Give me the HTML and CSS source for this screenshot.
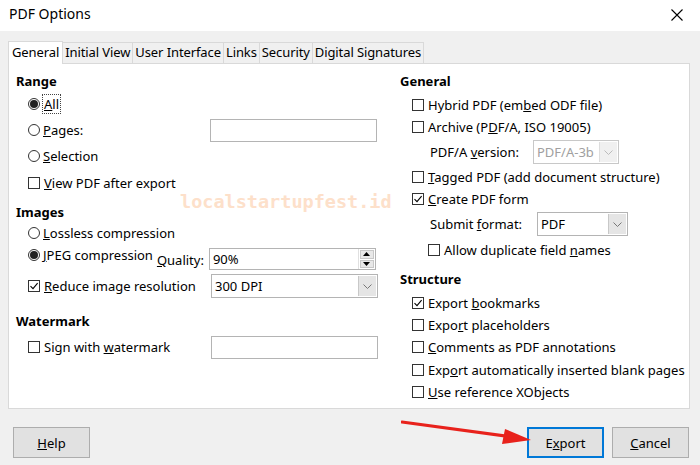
FILE: index.html
```html
<!DOCTYPE html>
<html>
<head>
<meta charset="utf-8">
<link rel="stylesheet" href="styles.css">
</head>
<body>
<div class="dialog">
  <div class="titlebar">
    <span class="title">PDF Options</span>
    <svg class="close" width="12" height="12" viewBox="0 0 12 12"><path d="M0.5 0.5L11.5 11.5M11.5 0.5L0.5 11.5" stroke="#000" stroke-width="1.1" fill="none"/></svg>
  </div>
  <div class="body">
    <div class="tabs">
      <div class="tab active">General</div>
      <div class="tab">Initial View</div>
      <div class="tab">User Interface</div>
      <div class="tab">Links</div>
      <div class="tab">Security</div>
      <div class="tab">Digital Signatures</div>
    </div>
    <div class="panel">
      <div class="col left">
        <div class="hdr">Range</div>
        <div class="row r26"><span class="radio on"></span><span class="focus"><u>A</u>ll</span></div>
        <div class="row r26"><span class="radio"></span><span class="lbl"><u>P</u>ages:</span><span class="textbox"></span></div>
        <div class="row r26"><span class="radio"></span><span><u>S</u>election</span></div>
        <div class="row r28"><span class="check"></span><span><u>V</u>iew PDF after export</span></div>
        <div class="hdr h-img">Images</div>
        <div class="row r22"><span class="radio"></span><span><u>L</u>ossless compression</span></div>
        <div class="row r28 jpeg">
          <span class="radio on"></span><span class="jlbl"><u>J</u>PEG compression</span>
          <span class="qlbl"><u>Q</u>uality:</span>
          <span class="spin"><span class="val">90%</span><span class="spinbtns"><span class="sb"><svg width="7" height="4" viewBox="0 0 7 4"><path d="M0 4L3.5 0L7 4Z" fill="#000"/></svg></span><span class="sb"><svg width="7" height="4" viewBox="0 0 7 4"><path d="M0 0L3.5 4L7 0Z" fill="#000"/></svg></span></span></span>
        </div>
        <div class="row r26 res"><span class="check on"><svg width="10" height="10" viewBox="0 0 10 10"><path d="M1.5 5.2L4 7.6L8.6 2.2" stroke="#000" stroke-width="1.1" fill="none"/></svg></span><span class="lbl"><u>R</u>educe image resolution</span>
          <span class="combo wide"><span class="val">300 DPI</span><span class="arrow"><svg width="9" height="5" viewBox="0 0 9 5"><path d="M0.5 0.5L4.5 4.5L8.5 0.5" stroke="#777" stroke-width="1" fill="none"/></svg></span></span>
        </div>
        <div class="hdr h-wm">Watermark</div>
        <div class="row r26 sign"><span class="check"></span><span class="lbl">Sign with <u>w</u>atermark</span><span class="textbox"></span></div>
      </div>
      <div class="col right">
        <div class="hdr">General</div>
        <div class="row r22"><span class="check"></span><span>Hybrid PDF (em<u>b</u>ed ODF file)</span></div>
        <div class="row r22"><span class="check"></span><span>Archive (P<u>D</u>F/A, ISO 19005)</span></div>
        <div class="row r28 sub"><span class="slbl">PDF/A <u>v</u>ersion:</span>
          <span class="combo dis"><span class="val">PDF/A-3b</span><span class="arrow"><svg width="9" height="5" viewBox="0 0 9 5"><path d="M0.5 0.5L4.5 4.5L8.5 0.5" stroke="#bbb" stroke-width="1" fill="none"/></svg></span></span>
        </div>
        <div class="row r22"><span class="check"></span><span><u>T</u>agged PDF (add document structure)</span></div>
        <div class="row r22"><span class="check on"><svg width="10" height="10" viewBox="0 0 10 10"><path d="M1.5 5.2L4 7.6L8.6 2.2" stroke="#000" stroke-width="1.1" fill="none"/></svg></span><span><u>C</u>reate PDF form</span></div>
        <div class="row r28 sub"><span class="slbl2">Submit <u>f</u>ormat:</span>
          <span class="combo fmt"><span class="val">PDF</span><span class="arrow"><svg width="9" height="5" viewBox="0 0 9 5"><path d="M0.5 0.5L4.5 4.5L8.5 0.5" stroke="#777" stroke-width="1" fill="none"/></svg></span></span>
        </div>
        <div class="row r24 sub2"><span class="check"></span><span>Allow duplicate field <u>n</u>ames</span></div>
        <div class="hdr h-st">Structure</div>
        <div class="row r22"><span class="check on"><svg width="10" height="10" viewBox="0 0 10 10"><path d="M1.5 5.2L4 7.6L8.6 2.2" stroke="#000" stroke-width="1.1" fill="none"/></svg></span><span>Export <u>b</u>ookmarks</span></div>
        <div class="row r22"><span class="check"></span><span>Expo<u>r</u>t placeholders</span></div>
        <div class="row r22"><span class="check"></span><span><u>C</u>omments as PDF annotations</span></div>
        <div class="row r23"><span class="check"></span><span>Exp<u>o</u>rt automatically inserted blank pages</span></div>
        <div class="row r22"><span class="check"></span><span><u>U</u>se reference XObjects</span></div>
      </div>
    </div>
    <div class="buttons">
      <button class="btn"><u>H</u>elp</button>
      <div class="spacer"></div>
      <button class="btn default">E<u>x</u>port</button>
      <button class="btn"><u>C</u>ancel</button>
    </div>
  </div>
  <div class="wm">localstartupfest.id</div>
  <svg class="redarrow" width="140" height="30" viewBox="0 0 140 30"><path d="M1 4L112 19" stroke="#e8221c" stroke-width="3.2" stroke-linecap="round" fill="none"/><path d="M104 11L130 22L101 26Z" fill="#e8221c"/></svg>
</div>
</body>
</html>
```

FILE: styles.css
```css
* { box-sizing: border-box; }
html, body { margin: 0; padding: 0; }
body {
  width: 700px;
  height: 465px;
  overflow: hidden;
  font-family: "Noto Sans", "Open Sans", sans-serif;
  font-size: 13px;
  color: #000;
  background: #f0f0f0;
}
.dialog { position: relative; width: 700px; height: 465px; }
.titlebar {
  height: 31px;
  background: #fff;
  display: flex;
  align-items: center;
  padding: 0 12px 4px 9px;
}
.title { font-size: 14px; flex: 1; }
.close { margin-right: 5px; margin-top: 3px; }
.body { padding: 10px 10px 0 8px; }
.tabs { display: flex; height: 22px; align-items: flex-end; }
.tab {
  height: 21px;
  line-height: 19px;
  padding: 0 2px;
  border: 1px solid #d9d9d9;
  border-bottom: none;
  background: #f0f0f0;
  margin-left: -1px;
  letter-spacing: -0.1px;
}
.tab:first-child { margin-left: 0; }
.tab.active {
  background: #fff;
  line-height: 21px;
  padding: 0 3px;
  position: relative;
  z-index: 1;
  margin-bottom: -1px;
  height: 23px;
}
.panel {
  background: #fff;
  border: 1px solid #d9d9d9;
  height: 346px;
  display: flex;
  padding: 7px 0 0 7px;
}
.col { display: flex; flex-direction: column; }
.left { width: 384px; }
.hdr { height: 20px; line-height: 20px; font-weight: bold; }
.h-img { margin-top: 5px; }
.h-wm { margin-top: 12px; }
.h-st { margin-top: 7px; }
.row { display: flex; align-items: center; padding-left: 12px; }
.r22 { height: 22px; }
.r23 { height: 23px; }
.r24 { height: 24px; }
.r26 { height: 26px; }
.r28 { height: 28px; }
.right .hdr + .row { margin-top: 3px; }
.res { margin-top: 1px; }
.sign { margin-top: 3px; }
.radio {
  width: 12px; height: 12px;
  border: 1px solid #333;
  border-radius: 50%;
  margin-right: 3px;
  display: flex; align-items: center; justify-content: center;
  flex: none;
}
.radio.on::after {
  content: ""; width: 8px; height: 8px; border-radius: 50%; background: #222;
}
.check {
  width: 12px; height: 12px;
  border: 1px solid #333;
  margin-right: 4px;
  flex: none;
  display: flex; align-items: center; justify-content: center;
  background: #fff;
}
.focus { outline: 1px dotted #444; outline-offset: 0; padding: 0 1px; }
.lbl { width: 167px; }
.textbox {
  width: 167px; height: 23px;
  border: 1px solid #b4b4b4;
  background: #fff;
}
.jpeg { align-items: flex-start; }
.jpeg .radio { margin-top: 5px; }
.jlbl { line-height: 22px; }
.qlbl { margin-left: 4px; margin-top: 5px; line-height: 22px; width: 52px; }
.spin {
  margin-top: 4px;
  width: 167px; height: 22px;
  border: 1px solid #b4b4b4;
  display: flex;
}
.val { flex: 1; padding-left: 3px; line-height: 20px; }
.spinbtns { width: 17px; display: flex; flex-direction: column; border-left: 1px solid #e0e0e0; padding: 1px; gap: 1px; }
.sb { flex: 1; background: #e8e8e8; border: 1px solid #c8c8c8; display: flex; align-items: center; justify-content: center; }
.combo {
  height: 24px;
  border: 1px solid #b4b4b4;
  display: flex;
  background: #fff;
}
.combo.wide { width: 167px; }
.arrow {
  width: 18px; display: flex; align-items: center; justify-content: center;
  background: #e5e5e5; border-left: 1px solid #c8c8c8; margin: 1px;
}
.combo .val { line-height: 22px; }
.sub { padding-left: 30px; }
.slbl { width: 103px; }
.combo.dis { width: 86px; height: 24px; border-color: #c8c8c8; color: #a0a0a0; }
.combo.dis .arrow { background: #f0f0f0; border-left-color: #ddd; }
.slbl2 { width: 107px; }
.combo.fmt { width: 91px; height: 24px; }
.sub2 { padding-left: 28px; }
.buttons {
  display: flex;
  padding: 18px 1px 0 5px;
  gap: 8px;
}
.spacer { flex: 1; }
.btn {
  width: 77px; height: 31px;
  background: #e1e1e1;
  border: 1px solid #adadad;
  font-family: inherit;
  font-size: 13px;
  color: #000;
  padding: 0;
}
.btn.default { border: 2px solid #0078d7; }
.wm {
  position: absolute;
  left: 180px; top: 191px;
  font-family: "DejaVu Sans Mono", monospace;
  font-weight: bold;
  font-size: 18.5px;
  color: #fde0ca;
}
.redarrow { position: absolute; left: 401px; top: 418px; }
```
